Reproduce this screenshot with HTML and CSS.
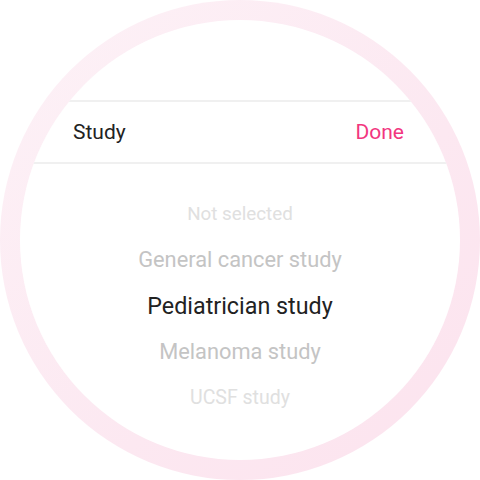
FILE: index.html
```html
<!DOCTYPE html>
<html>
<head>
<meta charset="utf-8">
<link rel="stylesheet" href="styles.css">
</head>
<body>
<div class="watch">
  <div class="face">
    <div class="header">
      <span class="title">Study</span>
      <span class="done">Done</span>
    </div>
    <ul class="picker">
      <li class="item far small">Not selected</li>
      <li class="item near">General cancer study</li>
      <li class="item selected">Pediatrician study</li>
      <li class="item near">Melanoma study</li>
      <li class="item far">UCSF study</li>
    </ul>
  </div>
</div>
</body>
</html>
```
FILE: styles.css
```css
html, body {
  margin: 0;
  padding: 0;
  background: #ffffff;
}
body {
  font-family: Roboto, "Noto Sans", sans-serif;
}
.watch {
  width: 480px;
  height: 480px;
  box-sizing: border-box;
  padding: 20px;
  border-radius: 50%;
  background: linear-gradient(135deg, #fdf2f7 0%, #fce8f1 60%, #fce3ee 100%);
}
.face {
  width: 440px;
  height: 440px;
  border-radius: 50%;
  background: #ffffff;
  overflow: hidden;
  display: flex;
  flex-direction: column;
  padding-top: 80px;
  box-sizing: border-box;
}
.header {
  height: 64px;
  box-sizing: border-box;
  border-top: 2px solid #f0f0f0;
  border-bottom: 2px solid #f0f0f0;
  display: flex;
  align-items: center;
  justify-content: space-between;
  padding: 0 56px 0 53px;
  font-size: 21px;
}
.title {
  color: #222222;
}
.done {
  color: #f2367f;
}
.picker {
  list-style: none;
  margin: 0;
  padding: 27px 0 0;
  display: flex;
  flex-direction: column;
  align-items: center;
}
.item {
  height: 46px;
  line-height: 46px;
  text-align: center;
  white-space: nowrap;
}
.far {
  font-size: 19.5px;
  color: #e0e0e0;
}
.small {
  font-size: 18.8px;
}
.near {
  font-size: 21.8px;
  color: #c4c4c4;
}
.selected {
  font-size: 23.3px;
  color: #222222;
}
```
